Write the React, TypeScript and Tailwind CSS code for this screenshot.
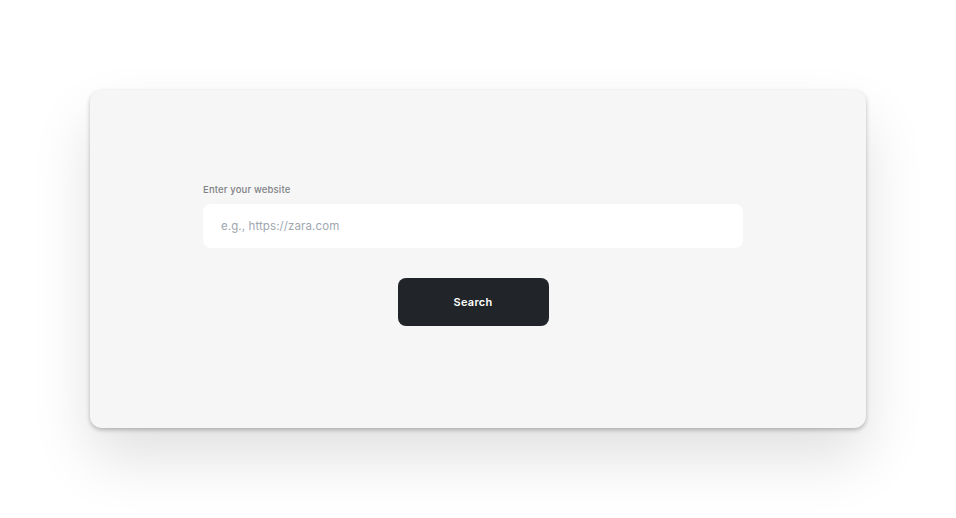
import React from "react";

export default function App() {
  return (
    <div
      className="w-[956px] h-[518px] bg-white pt-[90px] px-[90px]"
      style={{ fontFamily: "Inter, 'Noto Sans', sans-serif" }}
    >
      <div className="w-[776px] h-[338px] bg-[#f6f6f6] rounded-[12px] shadow-[0_30px_60px_rgba(0,0,0,0.12),0_2px_4px_rgba(0,0,0,0.25)] pt-[94px] pl-[113px]">
        <div className="w-[540px] flex flex-col">
          <label className="text-[9.5px] leading-[12px] text-[#818386] font-medium tracking-[0.15px]">
            Enter your website
          </label>
          <input
            className="mt-[8px] h-[44px] w-[540px] rounded-[8px] bg-white px-[18px] text-[11.5px] tracking-[0.1px] text-[#333] placeholder:text-[#9ea6b0] outline-none"
            placeholder="e.g., https://zara.com"
          />
          <div className="flex justify-center mt-[30px]">
            <button className="w-[151px] h-[48px] rounded-[8px] bg-[#212529] text-white text-[11px] font-semibold tracking-[0.3px]">
              Search
            </button>
          </div>
        </div>
      </div>
    </div>
  );
}
